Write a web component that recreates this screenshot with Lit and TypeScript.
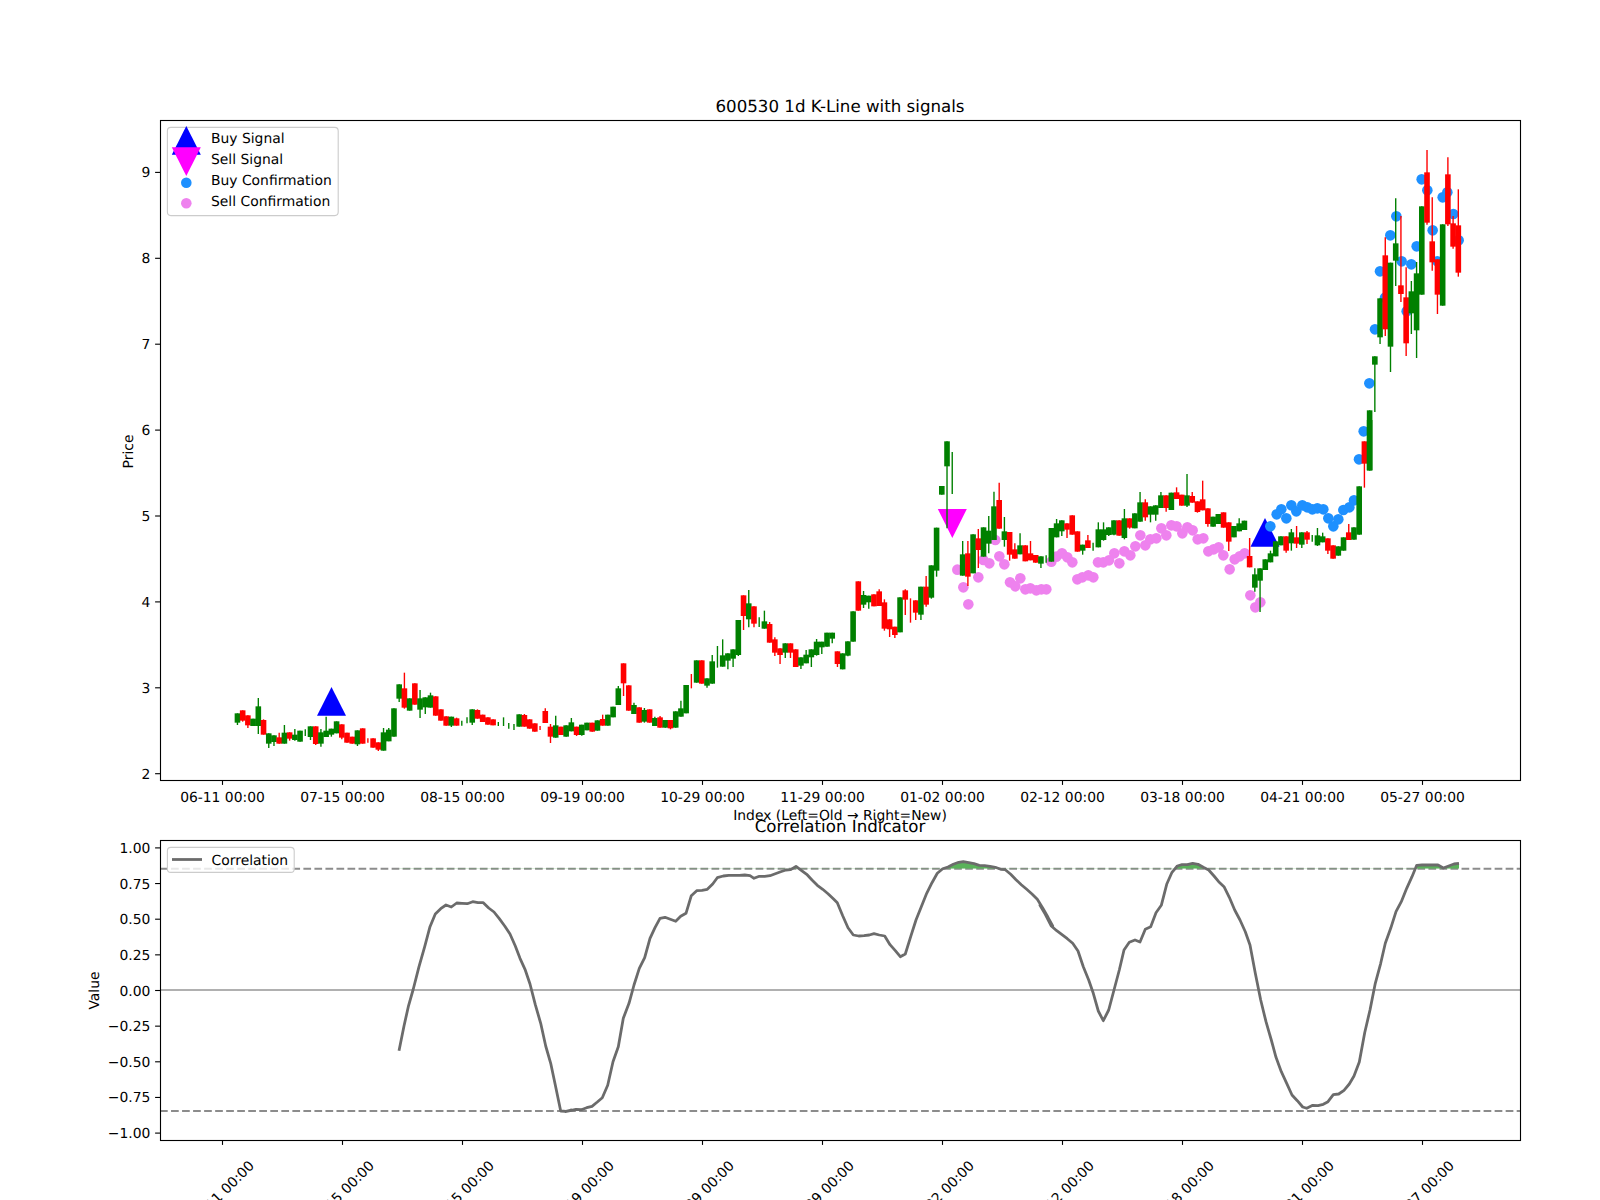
import { LitElement, html, svg, css } from "lit";
import { customElement } from "lit/decorators.js";

type Seg = [number, number, string];
// each segment: zoom crop origin (x, y), then candles as "x colour bodyTop bodyBottom wickTop wickBottom" in crop px (3x)
const SEGMENTS: Seg[] = [
  [220, 620, `50 g 280 308 280 315;68 r 271 302 271 305;84 r 286 316 286 324;98 g 296 318 296 318;114 g 259 318 234 342;130 r 300 344 298 344;147 g 340 371 340 384;162 g 346 366 346 378;176 r 352 371 338 371;192 g 338 371 315 371;209 r 337 356 337 362;224 g 344 360 327 362;240 g 332 365 332 365;256 g 0 0 328 348;272 g 319 351 319 360;288 r 319 372 319 375;302 g 337 371 327 380;318 g 332 351 290 351;334 g 326 344 326 350;351 g 304 340 304 340;366 r 313 353 313 358;381 r 338 368 338 368;395 r 350 371 350 371;410 g 331 373 331 378;428 r 325 371 325 371;444 r 0 0 355 368;458 r 355 383 355 383;474 r 367 389 367 393;491 g 337 392 324 392;507 g 329 364 324 364;522 g 265 350 265 350;536 g 193 236 193 246;551 r 205 263 158 266;570 g 235 272 235 272;584 r 190 254 190 254;600 g 235 269 210 294;615 g 232 262 232 282;630 g 226 263 218 263;647 r 229 287 229 287;663 r 268 302 268 302;677 r 289 317 289 317;693 g 290 317 290 321;710 r 295 317 293 317;727 g 0 0 302 317;742 g 0 0 292 310;755 g 268 308 268 315;770 r 270 296 268 296;788 r 284 306 284 306;804 r 292 314 292 314;818 r 298 316 298 316;836 g 0 0 306 318;852 g 0 0 292 318;868 g 0 0 309 326;883 g 0 0 312 330;897 g 283 320 283 320;912 r 285 320 282 320;928 r 298 326 298 326;944 r 310 335 310 335;960 r 0 0 318 330;975 r 273 309 265 309;990 r 320 350 312 369;1007 g 316 353 287 353;1022 r 320 345 320 345;1037 g 316 350 316 350;1052 g 307 334 294 334;1070 r 320 345 320 348;1085 g 314 345 314 347;1100 g 308 331 308 331;1115 r 308 335 308 335;1130 g 301 332 301 332;1148 r 297 317 284 317;1163 g 284 317 284 317;1178 g 260 292 260 292;1193 g 205 255 198 255`],
  [620, 640, `12 r 70 130 70 168;27 r 136 212 136 212;42 g 195 222 188 222;57 r 202 248 202 248;72 g 210 245 204 248;90 r 208 248 208 248;104 g 234 258 230 258;120 r 232 263 228 263;135 g 240 263 240 263;150 r 240 265 240 268;168 g 214 263 214 263;183 g 205 230 182 230;198 g 135 220 135 220;214 r 0 0 102 145`],
  [640, 540, `171 g 361 428 361 428;186 r 361 431 361 431;200 g 415 437 415 443;216 g 364 431 345 431;232 g 0 0 318 383;248 g 346 380 298 380;264 g 340 362 340 388;280 g 328 356 328 381;294 g 240 345 240 348;309 r 166 228 166 270;326 g 190 238 150 262;342 r 199 251 199 262;358 g 0 0 232 261;372 g 244 266 212 266;390 r 252 308 246 308;405 r 298 338 292 348;420 r 325 345 325 372;435 g 310 338 310 354;450 r 310 338 310 354;467 r 328 381 328 381;483 g 352 377 352 387;498 g 344 370 330 370;513 g 328 352 328 381;531 g 305 345 297 347;546 g 305 322 305 342;561 g 278 320 278 320;576 g 278 296 278 310;590 r 334 372 334 381;609 g 340 388 340 388;624 g 304 347 304 349;639 g 214 305 214 305;654 r 124 212 124 212;669 g 165 194 153 204;687 g 167 187 167 206;702 r 163 199 163 199;717 r 154 198 148 198;732 r 187 266 178 272;750 r 238 268 238 291;765 r 260 285 260 294;780 g 172 277 172 277;795 r 151 179 148 225;811 r 0 0 175 248;827 r 181 218 181 240;843 g 140 224 140 240;858 r 140 194 108 200;873 g 76 173 76 176`],
  [920, 420, `51 g 323 452 323 470;66 g 198 224 198 224;81 g 64 139 64 325;97 g 0 0 96 222;128 g 403 467 363 467;143 r 400 470 363 498;158 g 343 460 343 460;173 r 355 390 327 444;188 g 322 410 322 410;208 g 332 371 288 400;223 g 259 360 215 360;238 r 240 326 188 326;253 g 334 360 291 380;270 r 336 404 336 422;285 r 388 416 370 416;300 g 376 403 340 403;315 r 376 424 376 424;330 r 400 421 363 421;348 r 405 428 405 428;363 g 409 431 409 444;378 g 0 0 406 428;393 g 324 425 324 425;408 g 310 352 297 352;426 g 301 334 301 348;441 r 310 329 310 354;456 r 286 344 286 344;471 r 334 395 334 395;488 g 374 392 374 404;504 r 361 384 345 384;519 g 0 0 368 392;534 g 328 382 307 382;549 g 328 360 307 362;566 g 322 345 322 348;582 g 301 344 301 346;596 r 301 347 301 347;611 g 295 354 267 358;629 r 295 323 295 326;644 g 280 325 280 325;659 g 247 305 216 305;674 r 247 292 238 302;689 g 259 284 259 307;708 g 256 284 256 302;722 g 226 264 216 264;737 r 226 264 226 275;752 g 218 270 218 270;767 r 217 237 202 237;785 r 224 257 224 257;800 g 226 257 162 261;815 r 228 248 216 248;830 r 244 276 244 278;849 r 238 271 182 271;864 r 265 312 265 320;878 g 290 320 290 320;893 g 282 312 282 312;908 r 277 323 277 323;926 r 307 365 307 393;941 g 318 352 318 352;956 g 310 334 295 334;971 g 302 330 302 330`],
  [1220, 420, `90 r 408 442 354 442;105 g 463 503 445 515;120 g 445 482 445 576;135 g 418 450 418 450;150 g 400 427 392 427;168 g 364 409 364 409;183 g 349 376 349 376;198 r 349 392 349 398;213 g 337 370 327 392;228 r 352 371 318 384;246 g 337 374 337 384;261 r 337 359 333 372;277 g 0 0 345 365;291 g 346 376 324 378;309 g 349 367 338 367;324 r 355 392 355 402;339 r 376 416 376 416;354 g 379 407 379 407;369 g 352 392 352 392;386 r 337 360 312 360;402 g 322 359 322 359;417 g 199 344 199 344;431 r 64 131 64 203;447 g 0 152 0 152`],
  [1320, 130, `147 g 841 1020 841 1020;165 g 679 704 679 846;180 g 505 622 505 642;195 r 376 598 322 618;210 g 398 650 398 726;228 g 340 392 205 468;243 r 466 492 258 516;258 r 502 640 412 678;273 g 484 550 453 612;288 g 430 601 396 684;305 g 229 494 229 494;320 r 127 278 60 284;336 r 334 397 202 422;351 r 388 494 388 552;368 g 283 527 283 527;384 r 133 283 82 288;400 r 280 350 258 356;414 r 286 428 178 440`],
];

type Candle = { x: number; g: boolean; bt: number; bb: number; wt: number; wb: number };
const STEP = 120 / 23;
const candles: Candle[] = [];
for (const [ox, oy, s] of SEGMENTS) {
  for (const item of s.split(";")) {
    const p = item.trim().split(" ");
    const rx = ox + Number(p[0]) / 3;
    const k = Math.round((rx - 222.3) / STEP);
    const conv = (v: string) => oy + Number(v) / 3;
    const thin = p[2] === "0" && p[3] === "0";
    candles.push({
      x: 221.8 + k * STEP,
      g: p[1] === "g",
      bt: thin ? 0 : conv(p[2]),
      bb: thin ? 0 : conv(p[3]),
      wt: conv(p[4]),
      wb: conv(p[5]),
    });
  }
}
const dotsFrom = (ox: number, oy: number, pts: number[][]) => pts.map(([x, y]) => [ox + x / 3, oy + y / 3]);
const PINK = dotsFrom(920, 420, [[112,449],[130,502],[145,553],[175,472],[190,420],[208,430],[226,360],[238,409],[253,433],[270,487],[286,499],[301,475],[316,508],[331,505],[349,511],[364,508],[379,508],[394,425],[409,410],[426,400],[442,412],[457,427],[472,478],[487,472],[505,466],[520,472],[534,427],[550,427],[567,421],[583,400],[598,430],[613,394],[631,406],[646,379],[661,346],[676,376],[691,358],[709,355],[724,325],[739,346],[754,316],[770,319],[787,340],[802,322],[818,331],[833,358],[850,355],[865,394],[881,388],[896,382],[910,406],[929,448],[944,418],[959,409],[974,400],[991,526],[1006,562],[1021,547]]);
const BLUE = [
  ...dotsFrom(1220, 420, [[151,319],[170,283],[184,268],[199,295],[214,256],[229,274],[247,256],[262,262],[277,268],[292,265],[310,268],[325,295],[340,319],[355,298],[370,270],[388,262],[402,241],[417,118],[431,34]]),
  ...dotsFrom(1320, 130, [[148,760],[165,598],[180,424],[195,503],[211,316],[229,259],[245,394],[260,544],[274,403],[290,349],[305,148],[322,181],[338,301],[352,394],[368,202],[382,187],[400,252],[416,331]]),
];

const CURVE: number[][] = [
  ...dotsFrom(80, 790, [[957,782],[972,708],[985,650],[1000,597],[1017,530],[1034,470],[1050,410],[1066,372],[1082,356],[1098,345],[1114,351],[1130,339],[1146,340],[1162,341],[1178,335],[1194,338],[1210,338],[1226,354],[1242,366],[1258,386],[1274,408],[1290,432],[1306,468],[1320,505],[1335,538],[1350,582],[1366,644],[1382,700],[1397,768],[1412,820],[1426,885],[1442,963],[1458,964],[1474,960]]),
  ...dotsFrom(560, 830, [[16,845],[48,838],[64,839],[80,833],[96,829],[112,816],[127,803],[143,766],[159,695],[175,650],[190,565],[207,520],[222,465],[238,415],[254,383],[270,325],[285,293],[300,265],[315,262],[331,268],[347,274],[362,259],[378,250],[394,197],[410,182],[426,181],[442,178],[458,162],[472,143],[490,138],[506,136],[522,136],[538,136],[554,135],[570,137],[582,145],[598,139],[614,139],[630,137],[646,131],[662,125],[678,120],[692,119],[708,109],[724,121],[740,133],[756,150],[772,166],[788,178],[804,191],[820,206],[832,218],[848,257],[864,293],[880,315],[896,318],[912,317],[928,315],[942,311],[958,315],[974,318],[990,344],[1006,362],[1021,380],[1036,372],[1052,320],[1068,270],[1084,230],[1100,190],[1116,158],[1132,130],[1148,116],[1164,111],[1180,103],[1196,97],[1210,95],[1226,98],[1242,101],[1258,106],[1274,107],[1290,109],[1306,112],[1322,118],[1336,119],[1352,133],[1368,149],[1384,164],[1400,178],[1416,192],[1432,208],[1448,234],[1464,262],[1478,288]]),
  ...dotsFrom(1040, 830, [[0,226],[16,253],[34,288],[50,302],[66,314],[82,326],[98,340],[114,363],[130,410],[146,450],[160,490],[175,543],[190,572],[206,540],[222,480],[238,420],[252,360],[268,337],[285,330],[300,336],[316,298],[332,290],[348,248],[364,226],[380,163],[396,127],[412,108],[426,104],[442,104],[458,100],[474,103],[490,112],[506,120],[522,138],[536,155],[552,170],[568,202],[584,240],[600,270],[616,305],[630,345],[646,430],[662,510],[678,575],[694,630],[708,682],[724,725],[740,760],[756,795],[772,812],[788,831],[800,835],[818,826],[834,827],[850,823],[864,815],[880,794],[896,792],[912,781],[928,762],[942,738],[958,696],[974,608],[990,540],[1006,460],[1022,400],[1036,340],[1052,295],[1068,245],[1084,215],[1100,175],[1116,140],[1130,106],[1146,105],[1162,105],[1178,105],[1194,105],[1210,114],[1226,108],[1242,102],[1257,100]]),
];
const CURVE_STR = CURVE.map((p) => p[0].toFixed(1) + "," + p[1].toFixed(1)).join(" ");
const HI = 868.7;
const FILL_STR = CURVE_STR + ` ${CURVE[CURVE.length - 1][0].toFixed(1)},${HI} ${CURVE[0][0].toFixed(1)},${HI}`;

const DATE_LABELS = ["06-11", "07-15", "08-15", "09-19", "10-29", "11-29", "01-02", "02-12", "03-18", "04-21", "05-27"];
const xTick = (i: number) => 222.5 + i * 120;
const PRICE = [9, 8, 7, 6, 5, 4, 3, 2];
const yPrice = (p: number) => 172.4 + (9 - p) * 85.9;
const VALUES = ["1.00", "0.75", "0.50", "0.25", "0.00", "−0.25", "−0.50", "−0.75", "−1.00"];
const yVal = (i: number) => 847.9 + i * 35.65;

const tri = (cx: number, top: number, bot: number) => `${cx - 14.5},${bot} ${cx + 14.5},${bot} ${cx},${top}`;

@customElement("app-root")
export class AppRoot extends LitElement {
  static styles = css`
    :host { display: block; width: 1600px; height: 1200px; overflow: hidden; background: #fff; }
    svg { display: block; }
    text { font-family: "DejaVu Sans", sans-serif; font-size: 13.89px; fill: #000; text-rendering: geometricPrecision; }
    text.title { font-size: 16.67px; }
    .axis { fill: none; stroke: #000; stroke-width: 1.11; }
    .tick { stroke: #000; stroke-width: 1.11; }
    .legend { fill: #fff; fill-opacity: 0.8; stroke: #ccc; stroke-width: 1.11; }
    .wick { stroke-width: 1.39; }
    .g { fill: #008000; stroke: #008000; }
    .r { fill: #ff0000; stroke: #ff0000; }
    .body { stroke-width: 0; }
    .buy { fill: #0000ff; }
    .sell { fill: #ff00ff; }
    .bd { fill: #1e90ff; }
    .pd { fill: #ee82ee; }
    .dash { stroke: #808080; stroke-opacity: 0.9; stroke-width: 2.08; stroke-dasharray: 7.7 3.33; fill: none; }
    .zero { stroke: #b0b0b0; stroke-width: 1.8; }
    .curve { fill: none; stroke: #6b6b6b; stroke-width: 2.78; stroke-linejoin: round; }
    .area { fill: #5ab25a; }
    .lg-line { stroke: #6b6b6b; stroke-width: 2.78; }
  `;

  render() {
    return html`<svg width="1600" height="1200" viewBox="0 0 1600 1200">
      <defs><clipPath id="above"><rect x="160" y="841" width="1360" height="${HI - 841}"></rect></clipPath></defs>

      <polygon class="buy" points=${tri(331.5, 687, 715.7)}></polygon>
      <polygon class="buy" points=${tri(1265, 518, 546.7)}></polygon>
      <polygon class="sell" points=${tri(952.3, 538, 509)}></polygon>
      ${PINK.map((p) => svg`<circle class="pd" cx=${p[0]} cy=${p[1]} r="5.3"></circle>`)}
      ${BLUE.map((p) => svg`<circle class="bd" cx=${p[0]} cy=${p[1]} r="5.3"></circle>`)}
      ${candles.map((c) => svg`
        <line class="wick ${c.g ? "g" : "r"}" x1=${c.x} x2=${c.x} y1=${c.wt} y2=${c.wb}></line>
        ${c.bb > c.bt ? svg`<rect class="body ${c.g ? "g" : "r"}" x=${c.x - 2.8} y=${c.bt} width="5.6" height=${c.bb - c.bt}></rect>` : ""}
      `)}
      <rect class="axis" x="160.5" y="120.5" width="1360" height="660"></rect>

      ${PRICE.map((p) => svg`
        <line class="tick" x1="155.1" x2="160" y1=${yPrice(p)} y2=${yPrice(p)}></line>
        <text x="150.3" y=${yPrice(p) + 5} text-anchor="end">${p}</text>`)}
      ${DATE_LABELS.map((d, i) => svg`
        <line class="tick" x1=${xTick(i)} x2=${xTick(i)} y1="780" y2="784.9"></line>
        <text x=${xTick(i)} y="801.8" text-anchor="middle">${d} 00:00</text>`)}
      <text class="title" x="840" y="112" text-anchor="middle">600530 1d K-Line with signals</text>
      <text x="840" y="820" text-anchor="middle">Index (Left=Old → Right=New)</text>
      <text transform="translate(133 451.5) rotate(-90)" text-anchor="middle">Price</text>

      <rect class="legend" x="167.4" y="127.4" width="170.8" height="88.2" rx="3.5"></rect>
      <polygon class="buy" points=${tri(186.3, 126, 154.7)}></polygon>
      <polygon class="sell" points=${tri(186.3, 176, 147.3)}></polygon>
      <circle class="bd" cx="186.3" cy="182.7" r="5.3"></circle>
      <circle class="pd" cx="186.3" cy="203.3" r="5.3"></circle>
      <text x="211" y="143">Buy Signal</text>
      <text x="211" y="164">Sell Signal</text>
      <text x="211" y="185">Buy Confirmation</text>
      <text x="211" y="206">Sell Confirmation</text>

      <line class="zero" x1="160" x2="1520" y1="990" y2="990"></line>
      <line class="dash" x1="160" x2="1520" y1=${HI} y2=${HI}></line>
      <line class="dash" x1="160" x2="1520" y1="1111" y2="1111"></line>
      <polygon class="area" clip-path="url(#above)" points=${FILL_STR}></polygon>
      <polyline class="curve" points=${CURVE_STR}></polyline>
      <rect class="axis" x="160.5" y="840.5" width="1360" height="300"></rect>

      ${VALUES.map((v, i) => svg`
        <line class="tick" x1="155.1" x2="160" y1=${yVal(i)} y2=${yVal(i)}></line>
        <text x="150.3" y=${yVal(i) + 5} text-anchor="end">${v}</text>`)}
      ${DATE_LABELS.map((d, i) => svg`
        <line class="tick" x1=${xTick(i)} x2=${xTick(i)} y1="1140" y2="1144.9"></line>
        <text transform="translate(${xTick(i) - 1} 1193) rotate(-45)" y="5" text-anchor="middle">${d} 00:00</text>`)}
      <text class="title" x="840" y="832" text-anchor="middle">Correlation Indicator</text>
      <text transform="translate(98.5 990.5) rotate(-90)" text-anchor="middle">Value</text>

      <rect class="legend" x="167.4" y="847.4" width="126.8" height="25" rx="3.5"></rect>
      <line class="lg-line" x1="172" x2="202" y1="859.5" y2="859.5"></line>
      <text x="211.6" y="864.5">Correlation</text>
    </svg>`;
  }
}
